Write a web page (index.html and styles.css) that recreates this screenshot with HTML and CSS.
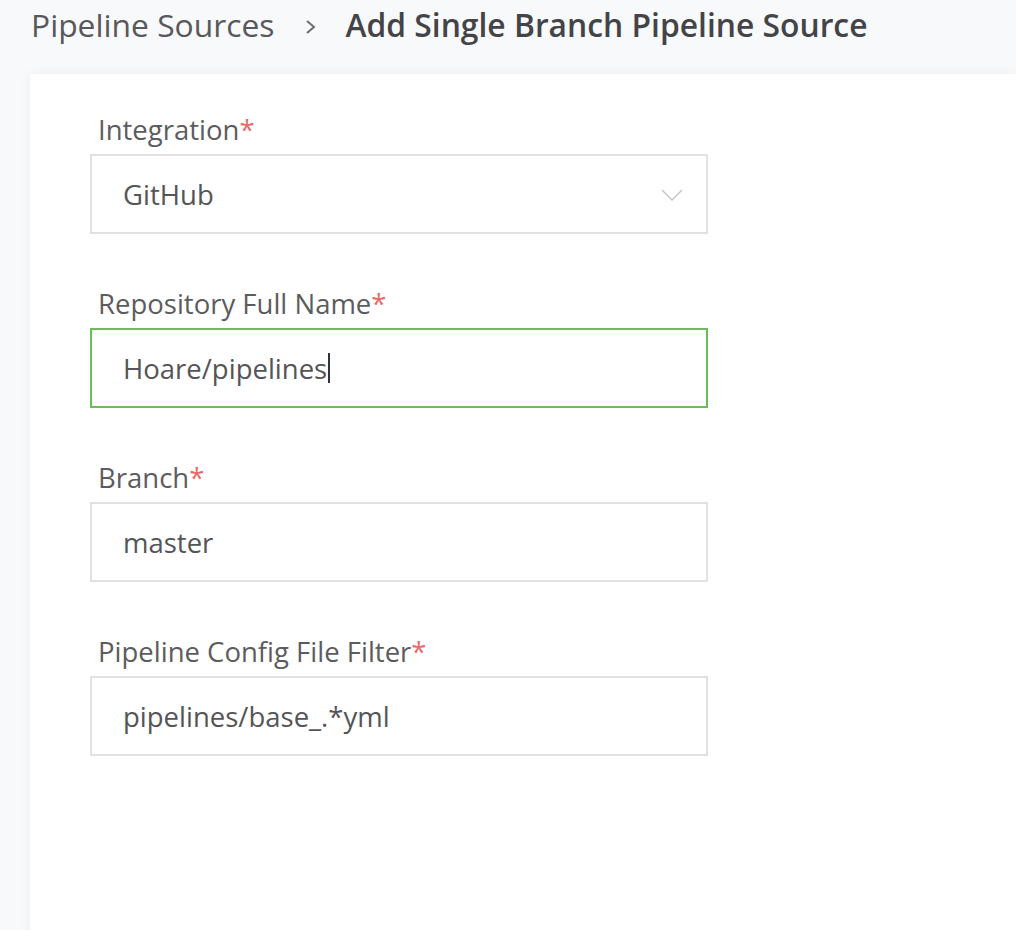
FILE: index.html
```html
<!DOCTYPE html>
<html>
<head>
<meta charset="utf-8">
<link rel="stylesheet" href="styles.css">
</head>
<body>
<header class="breadcrumb">
  <span class="crumb">Pipeline Sources</span>
  <svg class="sep" width="11" height="16" viewBox="0 0 11 16"><path d="M2 2 L9 8 L2 14" fill="none" stroke="#6e6e72" stroke-width="2"/></svg>
  <span class="current">Add Single Branch Pipeline Source</span>
</header>
<main class="card">
  <div class="field">
    <label class="label">Integration<span class="req">*</span></label>
    <div class="input select">
      <span class="value">GitHub</span>
      <svg class="chevron" width="22" height="12" viewBox="0 0 22 12"><path d="M1 1 L11 11 L21 1" fill="none" stroke="#c8c8cc" stroke-width="1.5"/></svg>
    </div>
  </div>
  <div class="field">
    <label class="label">Repository Full Name<span class="req">*</span></label>
    <div class="input focused">
      <span class="value">Hoare/pipelines</span><span class="caret"></span>
    </div>
  </div>
  <div class="field">
    <label class="label">Branch<span class="req">*</span></label>
    <div class="input">
      <span class="value">master</span>
    </div>
  </div>
  <div class="field">
    <label class="label">Pipeline Config File Filter<span class="req">*</span></label>
    <div class="input">
      <span class="value">pipelines/base_.*yml</span>
    </div>
  </div>
</main>
</body>
</html>
```

FILE: styles.css
```css
html, body {
  margin: 0;
  padding: 0;
  height: 100%;
  overflow: hidden;
}
body {
  background: #f8f9fa;
  font-family: "Open Sans", "Noto Sans", sans-serif;
  color: #555558;
}
.breadcrumb {
  height: 74px;
  box-sizing: border-box;
  padding: 2px 0 0 31px;
  display: flex;
  align-items: flex-start;
  font-size: 31.8px;
  line-height: 46px;
}
.crumb {
  color: #58585c;
}
.sep {
  margin: 17px 29px 0 31px;
  flex: none;
}
.current {
  font-weight: 600;
  color: #444448;
}
.card {
  margin-left: 30px;
  background: #fff;
  box-shadow: 0 0 12px rgba(0,0,0,0.05);
  min-height: 856px;
  padding: 40px 0 0 60px;
  display: flex;
  flex-direction: column;
  gap: 54px;
}
.field {
  display: flex;
  flex-direction: column;
  gap: 8px;
  width: 618px;
}
.label {
  font-size: 27.5px;
  line-height: 32px;
  color: #5c5c60;
  padding-left: 8px;
}
.req {
  color: #e86a6a;
}
.input {
  height: 80px;
  box-sizing: border-box;
  border: 2px solid #e1e1e5;
  display: flex;
  align-items: center;
  padding: 0 0 0 31px;
  font-size: 27.5px;
  color: #555558;
  position: relative;
}
.input.focused {
  border-color: #6bbd5b;
}
.caret {
  display: inline-block;
  width: 2px;
  height: 30px;
  background: #333;
  margin-left: 1px;
}
.chevron {
  position: absolute;
  right: 23px;
  top: 33px;
}
```
